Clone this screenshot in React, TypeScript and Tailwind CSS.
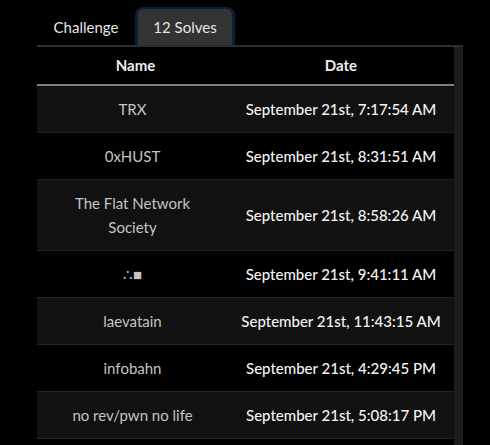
import React from "react";

const rows: { name: string; date: string }[] = [
  { name: "TRX", date: "September 21st, 7:17:54 AM" },
  { name: "0xHUST", date: "September 21st, 8:31:51 AM" },
  { name: "The Flat Network Society", date: "September 21st, 8:58:26 AM" },
  { name: "∴■", date: "September 21st, 9:41:11 AM" },
  { name: "laevatain", date: "September 21st, 11:43:15 AM" },
  { name: "infobahn", date: "September 21st, 4:29:45 PM" },
  { name: "no rev/pwn no life", date: "September 21st, 5:08:17 PM" },
  { name: "\u00a0", date: "\u00a0" },
];

export default function App() {
  return (
    <div
      className="w-[490px] h-[445px] bg-black overflow-hidden pl-[37px] pr-[27px] pt-[7px]"
      style={{ fontFamily: "Lato, 'Noto Sans', sans-serif" }}
    >
      <div className="flex items-end h-[38px]">
        <div className="w-[98px] h-[36px] flex items-center justify-center text-[15px] text-[#e6e6e6]">
          Challenge
        </div>
        <div className="w-[100px] h-[38px] rounded-t-[8px] bg-[#0c1d3a] px-[3px] pt-[2px]">
          <div className="h-full rounded-t-[6px] bg-[#333333] flex items-center justify-center text-[15px] text-[#e6e6e6]">
            12 Solves
          </div>
        </div>
      </div>
      <div className="flex border-t-2 border-[#2e2e2e]">
        <div className="w-[417px]">
          <div className="flex h-[39px] border-b-2 border-[#808080] text-[15px] font-bold text-[#eeeeee]">
            <div className="w-[191px] flex items-center justify-center pl-[6px]">Name</div>
            <div className="w-[226px] flex items-center justify-center">Date</div>
          </div>
          {rows.map((r, i) => (
            <div
              key={i}
              className={`flex border-b border-[#232323] text-[15px] leading-[24px] ${
                i % 2 === 0 ? "bg-[#111111]" : "bg-black"
              }`}
            >
              <div className="w-[191px] py-[11px] px-[30px] flex items-center justify-center text-center text-[#c4c4c4]">
                {r.name}
              </div>
              <div className="w-[226px] py-[11px] flex items-center justify-center text-[#f4f4f4] font-medium whitespace-nowrap">
                {r.date}
              </div>
            </div>
          ))}
        </div>
        <div className="w-[9px] bg-[#1c1c1c]" />
      </div>
    </div>
  );
}
